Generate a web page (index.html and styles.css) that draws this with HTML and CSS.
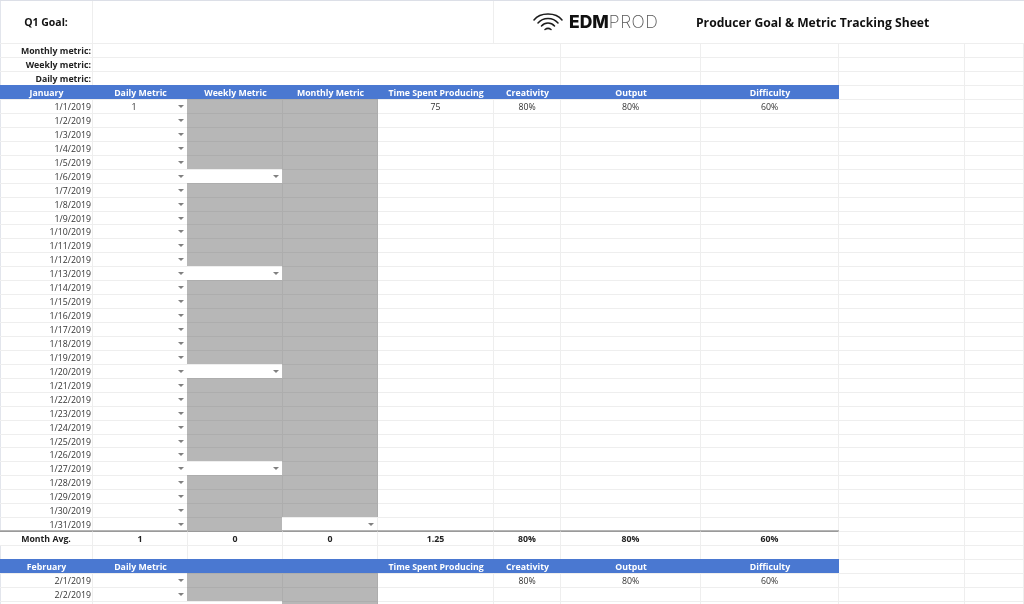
FILE: index.html
```html
<!DOCTYPE html>
<html lang="en">
<head>
<meta charset="utf-8">
<title>Producer Goal &amp; Metric Tracking Sheet</title>
<link rel="stylesheet" href="styles.css">
</head>
<body>
<main class="sheet">
<div class="row goal"><div class="c lab-lg">Q1 Goal:</div><div class="c"></div><div class="c brand"><svg class="wifi" viewBox="0 0 30 18" aria-hidden="true"><path d="M1 7C7 -1 23 -1 29 7M5 10C10 4 20 4 25 10M8.500 13C12 9 18 9 21.500 13M12 16.500C14 15 16 15 18 16.500"/></svg><span class="logo"><b>EDM</b><span class="prod">PROD</span></span><h1 class="title">Producer Goal &amp; Metric Tracking Sheet</h1></div></div>
<div class="row metric"><div class="c lab">Monthly metric:</div><div class="c"></div><div class="c"></div><div class="c"></div><div class="c"></div><div class="c"></div></div>
<div class="row metric"><div class="c lab">Weekly metric:</div><div class="c"></div><div class="c"></div><div class="c"></div><div class="c"></div><div class="c"></div></div>
<div class="row metric"><div class="c lab">Daily metric:</div><div class="c"></div><div class="c"></div><div class="c"></div><div class="c"></div><div class="c"></div></div>
<div class="row head"><div class="h">January</div><div class="h">Daily Metric</div><div class="h">Weekly Metric</div><div class="h">Monthly Metric</div><div class="h">Time Spent Producing</div><div class="h">Creativity</div><div class="h">Output</div><div class="h">Difficulty</div><div class="c"></div><div class="c"></div></div>
<div class="row"><div class="c date">1/1/2019</div><div class="c dd">1</div><div class="c gr"></div><div class="c gr"></div><div class="c mid">75</div><div class="c mid">80%</div><div class="c mid">80%</div><div class="c mid">60%</div><div class="c"></div><div class="c"></div></div>
<div class="row"><div class="c date">1/2/2019</div><div class="c dd"></div><div class="c gr"></div><div class="c gr"></div><div class="c"></div><div class="c"></div><div class="c"></div><div class="c"></div><div class="c"></div><div class="c"></div></div>
<div class="row"><div class="c date">1/3/2019</div><div class="c dd"></div><div class="c gr"></div><div class="c gr"></div><div class="c"></div><div class="c"></div><div class="c"></div><div class="c"></div><div class="c"></div><div class="c"></div></div>
<div class="row"><div class="c date">1/4/2019</div><div class="c dd"></div><div class="c gr"></div><div class="c gr"></div><div class="c"></div><div class="c"></div><div class="c"></div><div class="c"></div><div class="c"></div><div class="c"></div></div>
<div class="row"><div class="c date">1/5/2019</div><div class="c dd"></div><div class="c gr"></div><div class="c gr"></div><div class="c"></div><div class="c"></div><div class="c"></div><div class="c"></div><div class="c"></div><div class="c"></div></div>
<div class="row"><div class="c date">1/6/2019</div><div class="c dd"></div><div class="c dd open"></div><div class="c gr"></div><div class="c"></div><div class="c"></div><div class="c"></div><div class="c"></div><div class="c"></div><div class="c"></div></div>
<div class="row"><div class="c date">1/7/2019</div><div class="c dd"></div><div class="c gr"></div><div class="c gr"></div><div class="c"></div><div class="c"></div><div class="c"></div><div class="c"></div><div class="c"></div><div class="c"></div></div>
<div class="row"><div class="c date">1/8/2019</div><div class="c dd"></div><div class="c gr"></div><div class="c gr"></div><div class="c"></div><div class="c"></div><div class="c"></div><div class="c"></div><div class="c"></div><div class="c"></div></div>
<div class="row"><div class="c date">1/9/2019</div><div class="c dd"></div><div class="c gr"></div><div class="c gr"></div><div class="c"></div><div class="c"></div><div class="c"></div><div class="c"></div><div class="c"></div><div class="c"></div></div>
<div class="row"><div class="c date">1/10/2019</div><div class="c dd"></div><div class="c gr"></div><div class="c gr"></div><div class="c"></div><div class="c"></div><div class="c"></div><div class="c"></div><div class="c"></div><div class="c"></div></div>
<div class="row"><div class="c date">1/11/2019</div><div class="c dd"></div><div class="c gr"></div><div class="c gr"></div><div class="c"></div><div class="c"></div><div class="c"></div><div class="c"></div><div class="c"></div><div class="c"></div></div>
<div class="row"><div class="c date">1/12/2019</div><div class="c dd"></div><div class="c gr"></div><div class="c gr"></div><div class="c"></div><div class="c"></div><div class="c"></div><div class="c"></div><div class="c"></div><div class="c"></div></div>
<div class="row"><div class="c date">1/13/2019</div><div class="c dd"></div><div class="c dd open"></div><div class="c gr"></div><div class="c"></div><div class="c"></div><div class="c"></div><div class="c"></div><div class="c"></div><div class="c"></div></div>
<div class="row"><div class="c date">1/14/2019</div><div class="c dd"></div><div class="c gr"></div><div class="c gr"></div><div class="c"></div><div class="c"></div><div class="c"></div><div class="c"></div><div class="c"></div><div class="c"></div></div>
<div class="row"><div class="c date">1/15/2019</div><div class="c dd"></div><div class="c gr"></div><div class="c gr"></div><div class="c"></div><div class="c"></div><div class="c"></div><div class="c"></div><div class="c"></div><div class="c"></div></div>
<div class="row"><div class="c date">1/16/2019</div><div class="c dd"></div><div class="c gr"></div><div class="c gr"></div><div class="c"></div><div class="c"></div><div class="c"></div><div class="c"></div><div class="c"></div><div class="c"></div></div>
<div class="row"><div class="c date">1/17/2019</div><div class="c dd"></div><div class="c gr"></div><div class="c gr"></div><div class="c"></div><div class="c"></div><div class="c"></div><div class="c"></div><div class="c"></div><div class="c"></div></div>
<div class="row"><div class="c date">1/18/2019</div><div class="c dd"></div><div class="c gr"></div><div class="c gr"></div><div class="c"></div><div class="c"></div><div class="c"></div><div class="c"></div><div class="c"></div><div class="c"></div></div>
<div class="row"><div class="c date">1/19/2019</div><div class="c dd"></div><div class="c gr"></div><div class="c gr"></div><div class="c"></div><div class="c"></div><div class="c"></div><div class="c"></div><div class="c"></div><div class="c"></div></div>
<div class="row"><div class="c date">1/20/2019</div><div class="c dd"></div><div class="c dd open"></div><div class="c gr"></div><div class="c"></div><div class="c"></div><div class="c"></div><div class="c"></div><div class="c"></div><div class="c"></div></div>
<div class="row"><div class="c date">1/21/2019</div><div class="c dd"></div><div class="c gr"></div><div class="c gr"></div><div class="c"></div><div class="c"></div><div class="c"></div><div class="c"></div><div class="c"></div><div class="c"></div></div>
<div class="row"><div class="c date">1/22/2019</div><div class="c dd"></div><div class="c gr"></div><div class="c gr"></div><div class="c"></div><div class="c"></div><div class="c"></div><div class="c"></div><div class="c"></div><div class="c"></div></div>
<div class="row"><div class="c date">1/23/2019</div><div class="c dd"></div><div class="c gr"></div><div class="c gr"></div><div class="c"></div><div class="c"></div><div class="c"></div><div class="c"></div><div class="c"></div><div class="c"></div></div>
<div class="row"><div class="c date">1/24/2019</div><div class="c dd"></div><div class="c gr"></div><div class="c gr"></div><div class="c"></div><div class="c"></div><div class="c"></div><div class="c"></div><div class="c"></div><div class="c"></div></div>
<div class="row"><div class="c date">1/25/2019</div><div class="c dd"></div><div class="c gr"></div><div class="c gr"></div><div class="c"></div><div class="c"></div><div class="c"></div><div class="c"></div><div class="c"></div><div class="c"></div></div>
<div class="row"><div class="c date">1/26/2019</div><div class="c dd"></div><div class="c gr"></div><div class="c gr"></div><div class="c"></div><div class="c"></div><div class="c"></div><div class="c"></div><div class="c"></div><div class="c"></div></div>
<div class="row"><div class="c date">1/27/2019</div><div class="c dd"></div><div class="c dd open"></div><div class="c gr"></div><div class="c"></div><div class="c"></div><div class="c"></div><div class="c"></div><div class="c"></div><div class="c"></div></div>
<div class="row"><div class="c date">1/28/2019</div><div class="c dd"></div><div class="c gr"></div><div class="c gr"></div><div class="c"></div><div class="c"></div><div class="c"></div><div class="c"></div><div class="c"></div><div class="c"></div></div>
<div class="row"><div class="c date">1/29/2019</div><div class="c dd"></div><div class="c gr"></div><div class="c gr"></div><div class="c"></div><div class="c"></div><div class="c"></div><div class="c"></div><div class="c"></div><div class="c"></div></div>
<div class="row"><div class="c date">1/30/2019</div><div class="c dd"></div><div class="c gr"></div><div class="c gr"></div><div class="c"></div><div class="c"></div><div class="c"></div><div class="c"></div><div class="c"></div><div class="c"></div></div>
<div class="row"><div class="c date">1/31/2019</div><div class="c dd"></div><div class="c gr"></div><div class="c dd open"></div><div class="c"></div><div class="c"></div><div class="c"></div><div class="c"></div><div class="c"></div><div class="c"></div></div>
<div class="row avg"><div class="c tot">Month Avg.</div><div class="c tot">1</div><div class="c tot">0</div><div class="c tot">0</div><div class="c tot">1.25</div><div class="c tot">80%</div><div class="c tot">80%</div><div class="c tot">60%</div><div class="c"></div><div class="c"></div></div>
<div class="row"><div class="c"></div><div class="c"></div><div class="c"></div><div class="c"></div><div class="c"></div><div class="c"></div><div class="c"></div><div class="c"></div><div class="c"></div><div class="c"></div></div>
<div class="row head"><div class="h">February</div><div class="h">Daily Metric</div><div class="h"></div><div class="h"></div><div class="h">Time Spent Producing</div><div class="h">Creativity</div><div class="h">Output</div><div class="h">Difficulty</div><div class="c"></div><div class="c"></div></div>
<div class="row"><div class="c date">2/1/2019</div><div class="c dd"></div><div class="c gr"></div><div class="c gr"></div><div class="c"></div><div class="c mid">80%</div><div class="c mid">80%</div><div class="c mid">60%</div><div class="c"></div><div class="c"></div></div>
<div class="row"><div class="c date">2/2/2019</div><div class="c dd"></div><div class="c gr"></div><div class="c gr"></div><div class="c"></div><div class="c"></div><div class="c"></div><div class="c"></div><div class="c"></div><div class="c"></div></div>
<div class="row"><div class="c"></div><div class="c dd"></div><div class="c dd open"></div><div class="c gr"></div><div class="c"></div><div class="c"></div><div class="c"></div><div class="c"></div><div class="c"></div><div class="c"></div></div>
</main>
</body>
</html>
```
FILE: styles.css
```css
html, body {
  margin: 0;
  height: 604px;
  overflow: hidden;
  background: #fff;
}

.sheet {
  display: flex;
  flex-direction: column;
  width: 1024px;
  border-top: 1px solid #dcdfe7;
  font: 8.750px/15px "Open Sans", "Liberation Sans", sans-serif;
  color: #333;
  filter: blur(0.3px);
}

.row {
  display: grid;
  flex: none;
  grid-template-columns: 93px 95px 95px 95px 116px 67px 140px 138px 126px 59px;
  grid-template-rows: 100%;
  height: 13.950px;
}

.c {
  box-sizing: border-box;
  position: relative;
  min-width: 0;
  border-right: 1px solid #eeeeee;
  border-top: 1px solid #eeeeee;
  white-space: nowrap;
}

.c:first-child {
  box-shadow: inset 1px 0 0 #e2e5ec;
}

.goal {
  grid-template-columns: 93px 401px 530px;
  height: 42.300px;
}

.goal .c {
  display: flex;
  align-items: center;
  border-top: 0;
}

.lab-lg {
  justify-content: center;
  font-size: 10.500px;
  font-weight: 700;
  color: #111;
}

.goal .brand {
  border-right: 0;
  padding-left: 39px;
}

.wifi {
  flex: none;
  width: 30px;
  height: 18px;
  fill: none;
  stroke: #1c1c1c;
  stroke-width: 1.500;
  stroke-linecap: round;
}

.logo {
  flex: none;
  width: 89px;
  margin-left: 6px;
  font: 800 17.500px/1 Inter, sans-serif;
  color: #111;
}

.logo b {
  font-weight: 800;
}

.prod {
  font-weight: 200;
  letter-spacing: 0.500px;
  color: #555;
}

.title {
  flex: none;
  margin: 0 0 0 38px;
  font-size: 12.150px;
  font-weight: 700;
  color: #111;
}

.metric {
  grid-template-columns: 93px 468px 140px 138px 126px 59px;
}

.lab {
  padding-right: 1px;
  text-align: right;
  font-weight: 700;
  color: #222;
}

.head {
  color: #fff;
  font-weight: 700;
}

.h {
  box-sizing: border-box;
  padding-top: 1px;
  background: #4a78d1;
  text-align: center;
}

.date {
  padding-right: 1px;
  text-align: right;
}

.dd {
  padding-right: 12px;
  text-align: center;
}

.dd::after {
  content: "";
  position: absolute;
  right: 3px;
  top: 5px;
  border-top: 3px solid #808080;
  border-left: 3px solid transparent;
  border-right: 3px solid transparent;
}

.open {
  margin-left: -1px;
  background: #fff;
}

.gr {
  margin-left: -1px;
  background: #b7b7b7;
  border-color: #adadad;
}

.gr + .gr {
  border-left: 1px solid #adadad;
}

.mid,
.tot {
  text-align: center;
}

.tot {
  font-weight: 700;
  color: #222;
}

.avg .c:nth-child(-n+8) {
  border-top-color: #9a9a9a;
  box-shadow: 0 -1px 0 #b4b4b4;
}
```
